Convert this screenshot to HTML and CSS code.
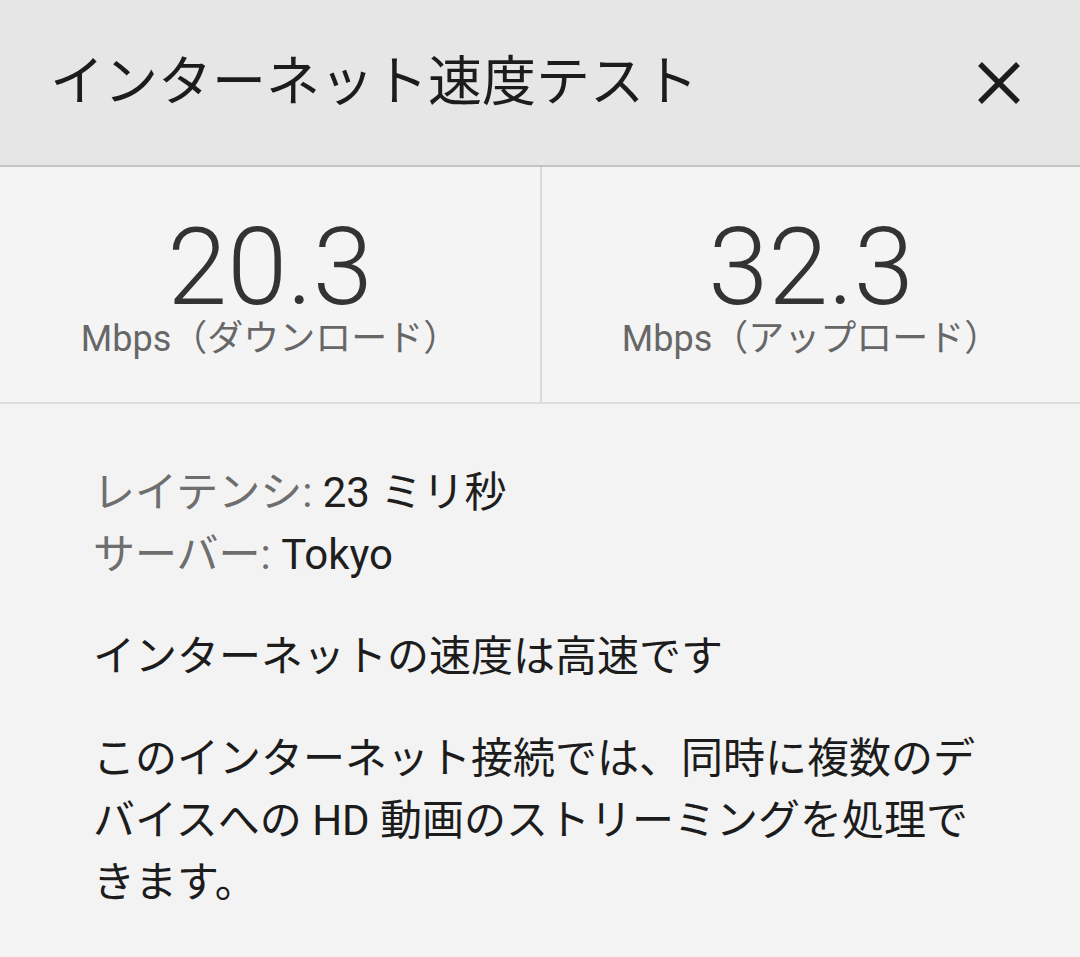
FILE: index.html
```html
<!DOCTYPE html>
<html lang="ja">
<head>
<meta charset="utf-8">
<title>インターネット速度テスト</title>
<link rel="stylesheet" href="styles.css">
</head>
<body>
<header class="header">
  <h1 class="title">インターネット速度テスト</h1>
  <button class="close" aria-label="閉じる">
    <svg width="44" height="44" viewBox="0 0 44 44"><path d="M3 3 L41 41 M41 3 L3 41" stroke="#1c1c1c" stroke-width="5.5" stroke-linecap="butt" fill="none"/></svg>
  </button>
</header>
<section class="stats">
  <div class="stat">
    <div class="num">20.3</div>
    <div class="unit">Mbps（ダウンロード）</div>
  </div>
  <div class="stat">
    <div class="num">32.3</div>
    <div class="unit">Mbps（アップロード）</div>
  </div>
</section>
<main class="content">
  <div class="details">
    <div class="row"><span class="label">レイテンシ:</span> <span class="value">23 ミリ秒</span></div>
    <div class="row"><span class="label">サーバー:</span> <span class="value">Tokyo</span></div>
  </div>
  <p class="msg">インターネットの速度は高速です</p>
  <p class="msg">このインターネット接続では、同時に複数のデバイスへの HD 動画のストリーミングを処理できます。</p>
</main>
</body>
</html>
```
FILE: styles.css
```css
* { box-sizing: border-box; }
html, body { margin: 0; padding: 0; }
body {
  width: 1080px;
  height: 957px;
  overflow: hidden;
  background: #f3f3f3;
  font-family: Roboto, "Noto Sans CJK JP", sans-serif;
  color: #222;
}
.header {
  height: 167px;
  background: #e6e6e6;
  border-bottom: 2px solid #c3c3c3;
  display: flex;
  align-items: center;
  justify-content: space-between;
  padding: 0 59px 0 50px;
}
.title {
  margin: 0;
  font-size: 54px;
  font-weight: 400;
  color: #1c1c1c;
  line-height: 1;
}
.close {
  border: 0;
  background: none;
  padding: 0;
  width: 44px;
  height: 44px;
  display: block;
}
.close svg { display: block; }
.stats {
  display: grid;
  grid-template-columns: 1fr 1fr;
  height: 237px;
  background: #f4f4f4;
  border-bottom: 2px solid #dcdcdc;
}
.stat {
  padding-top: 46px;
  text-align: center;
}
.stat + .stat { border-left: 2px solid #d9d9d9; }
.num {
  font-size: 108px;
  font-weight: 300;
  line-height: 1;
  color: #333;
}
.unit {
  font-size: 36px;
  line-height: 1;
  color: #676767;
}
.content {
  padding: 58px 95px 0 93px;
  font-size: 42px;
  line-height: 62px;
}
.details { margin-bottom: 40px; }
.label { color: #6e6e6e; }
.value { color: #1e1e1e; }
.msg {
  margin: 0 0 40px 0;
  color: #1c1c1c;
}
```
